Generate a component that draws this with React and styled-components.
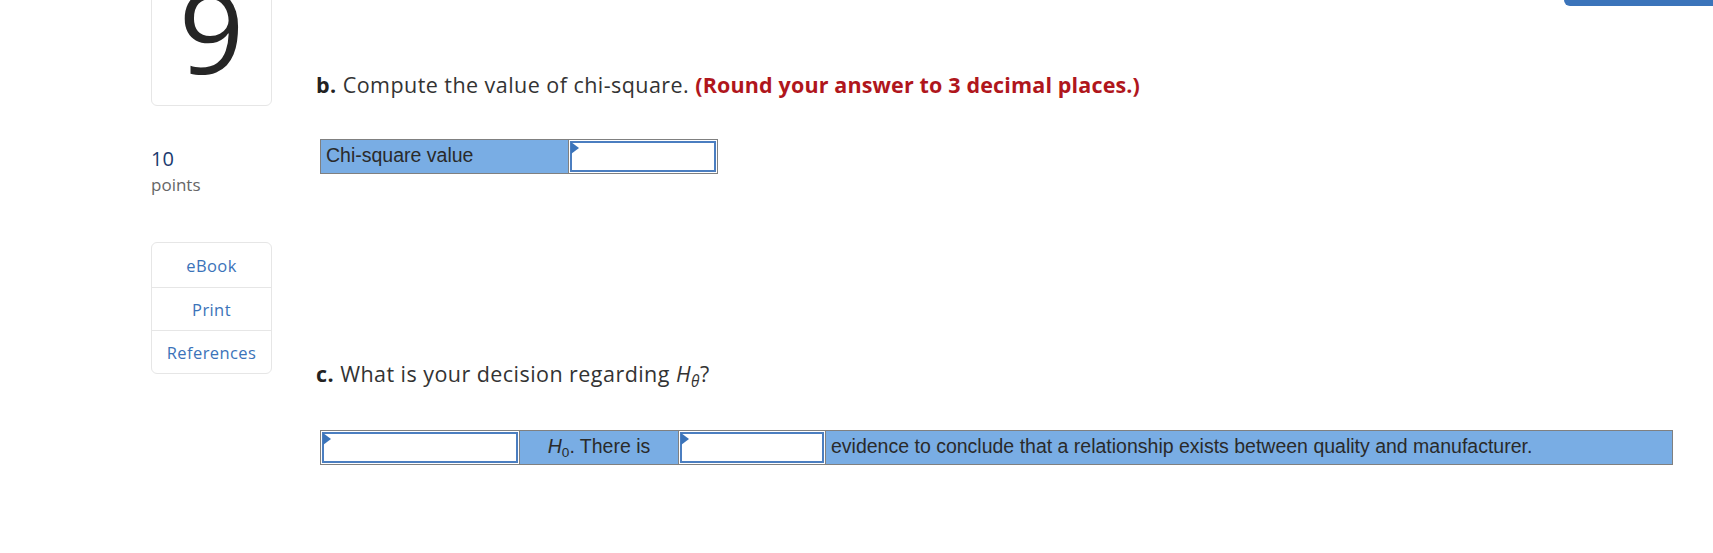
import React from "react";
import styled, { createGlobalStyle } from "styled-components";

const Global = createGlobalStyle`
  html, body { margin: 0; padding: 0; background: #fff; }
  body { font-family: "Open Sans", "Noto Sans", sans-serif; color: #333; overflow: hidden; }
`;

const Page = styled.div`
  position: relative;
  width: 1713px;
  height: 553px;
  overflow: hidden;
`;

const TopButton = styled.div`
  position: absolute;
  top: -10px;
  right: 0;
  width: 149px;
  height: 16px;
  background: #3b74ba;
  border-radius: 0 0 0 6px;
`;

const Layout = styled.div`
  display: flex;
  align-items: flex-start;
  margin-top: -30px;
  padding-left: 151px;
  gap: 44px;
`;

const Side = styled.div`
  width: 121px;
  display: flex;
  flex-direction: column;
`;

const NumberBox = styled.div`
  height: 136px;
  border: 1px solid #e6e6e6;
  border-radius: 6px;
  display: flex;
  justify-content: center;
  align-items: flex-end;
  padding-bottom: 18px;
  font-size: 114px;
  line-height: 1;
  color: #262626;
  box-sizing: border-box;
`;

const Points = styled.div`
  margin-top: 41px;
  display: flex;
  flex-direction: column;
`;

const PointsValue = styled.span`
  font-size: 20px;
  line-height: 24px;
  color: #1b3b6f;
`;

const PointsLabel = styled.span`
  margin-top: 4px;
  font-size: 17px;
  line-height: 20px;
  color: #666;
`;

const Nav = styled.div`
  margin-top: 47px;
  border: 1px solid #e6e6e6;
  border-radius: 6px;
  display: flex;
  flex-direction: column;
`;

const NavItem = styled.div`
  height: ${(p) => p.$h}px;
  display: flex;
  align-items: center;
  justify-content: center;
  font-size: 16.5px;
  letter-spacing: 0.4px;
  color: #3b73b9;
  border-top: ${(p) => (p.$first ? "none" : "1px solid #e6e6e6")};
`;

const Main = styled.div`
  flex: 1;
  display: flex;
  flex-direction: column;
  padding-top: 102px;
  padding-right: 40px;
`;

const Question = styled.p`
  margin: 0;
  margin-top: ${(p) => p.$mt || 0}px;
  font-size: 21.5px;
  line-height: 26px;
  letter-spacing: 0.45px;
  color: #333;
  white-space: nowrap;
`;

const Letter = styled.b`
  font-weight: 700;
  color: #222;
`;

const Red = styled.b`
  font-weight: 700;
  letter-spacing: 0.15px;
  color: #b0161c;
`;

const AnswerRow = styled.div`
  display: flex;
  border: 1px solid #808080;
  width: ${(p) => p.$w}px;
  height: 35px;
  box-sizing: border-box;
  margin-top: ${(p) => p.$mt}px;
  margin-left: 4px;
  font-family: "Liberation Sans", Arial, sans-serif;
  font-size: 19.5px;
  letter-spacing: 0;
  color: #2a2a2a;
`;

const Label = styled.div`
  width: ${(p) => (p.$w ? p.$w + "px" : "auto")};
  flex: ${(p) => (p.$w ? "none" : 1)};
  background: #79ade4;
  display: flex;
  align-items: center;
  justify-content: ${(p) => (p.$center ? "center" : "flex-start")};
  padding-left: ${(p) => (p.$center ? 0 : 5)}px;
  padding-bottom: 3px;
  box-sizing: border-box;
  border-left: ${(p) => (p.$first ? "none" : "1px solid #808080")};
  white-space: nowrap;
`;

const InputCell = styled.div`
  position: relative;
  width: ${(p) => p.$w}px;
  padding: 1px;
  box-sizing: border-box;
  border-left: ${(p) => (p.$first ? "none" : "1px solid #808080")};
`;

const Input = styled.div`
  height: 100%;
  border: 2px solid #4b7ec0;
  box-sizing: border-box;
  background: #fff;
`;

const Flag = styled.span`
  position: absolute;
  top: 2px;
  left: 2px;
  width: 0;
  height: 0;
  border-top: 6px solid transparent;
  border-bottom: 6px solid transparent;
  border-left: 8px solid #3b74ba;
`;

const H = styled.i`
  font-style: italic;
`;

const Sub = styled.sub`
  font-size: 0.7em;
  vertical-align: -0.3em;
  line-height: 0;
`;

const SubTheta = styled.sub`
  font-size: 0.72em;
  font-style: italic;
  vertical-align: -0.3em;
  line-height: 0;
`;

function Blank({ w, first }) {
  return (
    <InputCell $w={w} $first={first}>
      <Input />
      <Flag />
    </InputCell>
  );
}

export default function App() {
  return (
    <Page>
      <Global />
      <TopButton />
      <Layout>
        <Side>
          <NumberBox>9</NumberBox>
          <Points>
            <PointsValue>10</PointsValue>
            <PointsLabel>points</PointsLabel>
          </Points>
          <Nav>
            <NavItem $first $h={44}>eBook</NavItem>
            <NavItem $h={42}>Print</NavItem>
            <NavItem $h={42}>References</NavItem>
          </Nav>
        </Side>
        <Main>
          <Question>
            <Letter>b.</Letter> Compute the value of chi-square.{" "}
            <Red>(Round your answer to 3 decimal places.)</Red>
          </Question>
          <AnswerRow $w={398} $mt={41}>
            <Label $first $w={247}>Chi-square value</Label>
            <Blank w={149} />
          </AnswerRow>
          <Question $mt={187}>
            <Letter>c.</Letter> What is your decision regarding{" "}
            <H>H</H>
            <SubTheta>θ</SubTheta>?
          </Question>
          <AnswerRow $w={1353} $mt={43}>
            <Blank first w={198} />
            <Label $center $w={159}>
              <span>
                <H>H</H>
                <Sub>0</Sub>. There is
              </span>
            </Label>
            <Blank w={147} />
            <Label>evidence to conclude that a relationship exists between quality and manufacturer.</Label>
          </AnswerRow>
        </Main>
      </Layout>
    </Page>
  );
}
